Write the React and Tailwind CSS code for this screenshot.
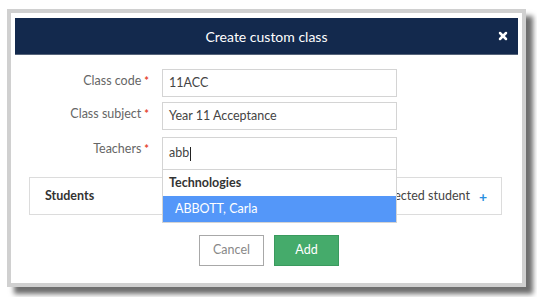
import { X } from 'lucide-react';

const Label = ({ children }) => (
  <div className="w-[123px] shrink-0 pt-[3px] text-right text-[12.5px] leading-[18px] text-[#666]">
    {children}
    <span className="ml-[3px] align-top text-[11px] font-bold text-[#e5452f]">*</span>
  </div>
);

export default function App() {
  return (
    <div className="h-[297px] w-[537px] bg-white pl-[7px] pt-[9px] font-['Lato','Open_Sans',sans-serif]">
      <div className="flex h-[278px] w-[519px] flex-col border-4 border-[#d0d0d0] bg-white px-[4px] pt-[5px] shadow-[7px_7px_5px_#6e6e6e]">
        {/* Header */}
        <div className="relative flex h-[37px] items-center justify-center border-b border-[#56647a] bg-[#13294d] text-[14px] text-white">
          Create custom class
          <X className="absolute right-[9px] top-[12px] h-[12px] w-[12px]" strokeWidth={5} />
        </div>

        {/* Form */}
        <div className="flex flex-col gap-[5px] pl-[11px] pt-[14px]">
          <div className="flex items-start gap-[13px]">
            <Label>Class code</Label>
            <div className="flex h-[28px] w-[235px] items-center border border-[#d4d4d4] px-[6px] text-[12.5px] text-[#444]">
              11ACC
            </div>
          </div>
          <div className="flex items-start gap-[13px]">
            <Label>Class subject</Label>
            <div className="flex h-[28px] w-[235px] items-center border border-[#d4d4d4] px-[6px] text-[12.5px] text-[#444]">
              Year 11 Acceptance
            </div>
          </div>
          <div className="mt-[2px] flex items-start gap-[13px]">
            <Label>Teachers</Label>
            <div className="relative w-[235px]">
              <div className="flex h-[33px] items-center border border-[#d4d4d4] px-[6px] text-[12.5px] text-[#444]">
                abb
                <span className="ml-[1px] h-[14px] w-px bg-[#222]" />
              </div>
              {/* Autocomplete menu */}
              <div className="absolute left-0 top-[32px] z-10 w-[235px] border border-[#d4d4d4] bg-white">
                <div className="flex h-[26px] items-center px-[6px] text-[12.5px] font-bold text-[#333]">
                  Technologies
                </div>
                <div className="flex h-[26px] items-center bg-[#5497f9] px-[12px] text-[12.5px] text-white">
                  ABBOTT, Carla
                </div>
              </div>
            </div>
          </div>
        </div>

        {/* Students panel */}
        <div className="ml-[14px] mr-[16px] mt-[7px] flex h-[38px] items-center justify-between border border-[#dcdcdc] pl-[15px] pr-[14px] text-[12.5px]">
          <span className="font-bold text-[#333]">Students</span>
          <span className="flex items-center gap-[9px] text-[#444]">
            Add selected student
            <span className="text-[14px] font-bold text-[#2a8fe0]">+</span>
          </span>
        </div>

        {/* Buttons */}
        <div className="mt-[20px] flex justify-center gap-[10px] pl-[5px]">
          <button className="h-[31px] w-[65px] border border-[#a8a8a8] bg-white text-[12.5px] text-[#888]">
            Cancel
          </button>
          <button className="h-[31px] w-[65px] border border-[#3a9a5e] bg-[#45ab6b] text-[12.5px] text-white">
            Add
          </button>
        </div>
      </div>
    </div>
  );
}
